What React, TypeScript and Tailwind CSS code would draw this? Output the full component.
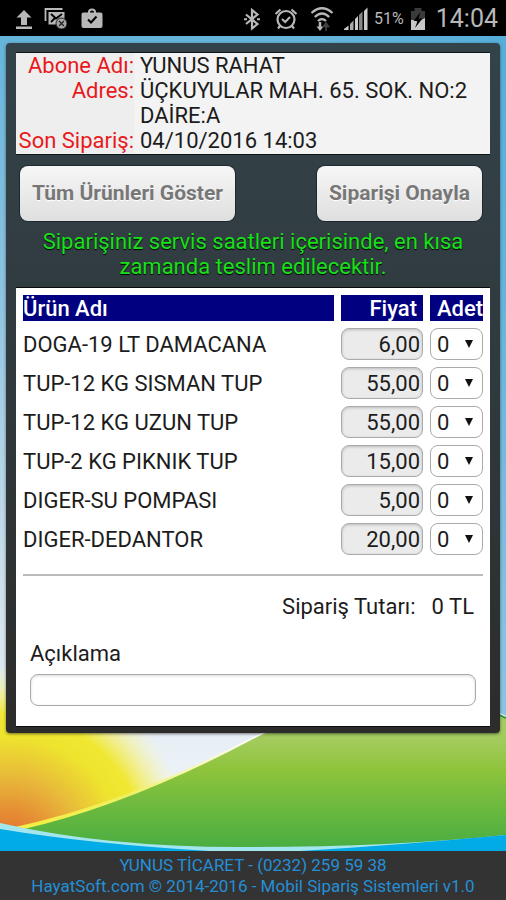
import React, { useState } from 'react';

interface Product {
  id: string;
  name: string;
  price: string;
}

const products: Product[] = [
  { id: 'doga-19', name: 'DOGA-19 LT DAMACANA', price: '6,00' },
  { id: 'tup-12-sisman', name: 'TUP-12 KG SISMAN TUP', price: '55,00' },
  { id: 'tup-12-uzun', name: 'TUP-12 KG UZUN TUP', price: '55,00' },
  { id: 'tup-2-piknik', name: 'TUP-2 KG PIKNIK TUP', price: '15,00' },
  { id: 'su-pompasi', name: 'DIGER-SU POMPASI', price: '5,00' },
  { id: 'dedantor', name: 'DIGER-DEDANTOR', price: '20,00' },
];

const customer = [
  { label: 'Abone Adı:', value: 'YUNUS RAHAT' },
  { label: 'Adres:', value: 'ÜÇKUYULAR MAH. 65. SOK. NO:2 DAİRE:A' },
  { label: 'Son Sipariş:', value: '04/10/2016 14:03' },
];

const parsePrice = (price: string) => Number(price.replace(',', '.'));

const StatusBar: React.FC = () => (
  <div className="flex h-9 items-center justify-between bg-black pl-4 pr-2 pt-0.5 text-[#b8b8b8]">
    <div className="flex items-center gap-3">
      <svg className="h-6 w-4" viewBox="0 0 16 24" fill="currentColor">
        <path d="M8 3l7.500 7.500H11V18H5v-7.500H.5z" />
        <path d="M0 19.500h16V22H0z" />
      </svg>
      <svg className="h-6 w-6" viewBox="0 0 24 24" fill="none" stroke="currentColor">
        <path d="M1.500 14V2h17" strokeWidth="1.800" />
        <path d="M4.500 5h16v7l-6 5.500h-10z" fill="currentColor" stroke="none" />
        <path d="M7 7l5 4.500L18 7M7 15l4-4" stroke="#000" strokeWidth="1.800" />
        <circle cx="17.500" cy="16.500" r="5.500" fill="#a5a5a5" stroke="#000" strokeWidth=".8" />
        <path d="M15 14l5 5M20 14l-5 5" stroke="#222" strokeWidth="1.200" />
      </svg>
      <svg className="h-6 w-6" viewBox="0 0 24 24">
        <path
          fill="currentColor"
          fillRule="evenodd"
          d="M3.500 5.500H8V5a4 3.500 0 0 1 8 0v.5h4.500a2 2 0 0 1 2 2V19a2 2 0 0 1-2 2h-17a2 2 0 0 1-2-2V7.500a2 2 0 0 1 2-2zM10 5.500h4V5a2 1.500 0 0 0-4 0z"
        />
        <path d="M8 12.500l3 3 5.500-6" fill="none" stroke="#000" strokeWidth="2" />
      </svg>
    </div>
    <div className="flex items-center gap-1.5">
      <svg className="h-6 w-5" viewBox="0 0 20 24" fill="none" stroke="currentColor" strokeWidth="2.200">
        <path d="M4 7.500l11.500 9.500L10 21.500V3l5.500 4.500L4 17" />
        <path d="M2 12.200h3M15 12.200h3" strokeWidth="2" />
      </svg>
      <svg className="ml-1.5 h-6 w-6" viewBox="0 0 24 24" fill="none" stroke="currentColor">
        <circle cx="12" cy="12.500" r="8.500" strokeWidth="2.200" />
        <path d="M8 12l3.200 3L16 10" strokeWidth="2" />
        <path d="M1.500 7L6.500 2.500M22.500 7l-5-4.500M6 19l-2 2.500M18 19l2 2.500" strokeWidth="2.200" />
      </svg>
      <svg className="ml-1.5 h-7 w-6" viewBox="0 0 24 28" fill="none" stroke="currentColor" strokeWidth="2.200">
        <path d="M1.500 8Q12-1.500 22.500 8M4.800 12Q12 5 19.200 12M8 16Q12 12 16 16" />
        <path d="M10 17v6" strokeWidth="2.500" />
        <path d="M6.500 21.500h7L10 26z" fill="currentColor" stroke="none" />
        <path d="M16 26v-6M13.500 21.500L16 18l2.500 3.500z" stroke="#444" strokeWidth="1.500" />
      </svg>
      <svg className="ml-1 h-6 w-6" viewBox="0 0 24 24">
        <path d="M0 23v-1l4.500-3.500V23z" fill="#ccc" />
        <path d="M6 23v-6l3.500-3.500V23z" fill="#aaa" />
        <path d="M11 23V12l3-3v14z" fill="#ccc" />
        <path d="M15 23V8l3.500-3.500V23z" fill="#888" />
        <path d="M20 23V4l3.500-3.500V23z" fill="#ccc" />
      </svg>
      <span className="text-base">51%</span>
      <svg className="h-6 w-4" viewBox="0 0 16 24">
        <path d="M4.500 1h7v3H15v19H1V4h3.500z" fill="#3a3a3a" />
        <path d="M1 13h5l1 2 8-4v12H1z" fill="#c8c8c8" />
        <path d="M10.500 5L3.500 14h4L5 21l7.500-9.500h-4z" fill="#000" />
      </svg>
      <span className="pl-1 text-[25px] leading-8">14:04</span>
    </div>
  </div>
);

// Sunrise and hill behind the order card
const Landscape: React.FC = () => (
  <svg
    className="absolute inset-0 -z-10 h-full w-full"
    viewBox="0 0 506 815"
    preserveAspectRatio="none"
    aria-hidden="true"
  >
    <defs>
      <linearGradient id="sky" x1="0" y1="0" x2="0" y2="1">
        <stop offset="0" stopColor="#66b4da" />
        <stop offset=".3" stopColor="#8cc2e0" />
        <stop offset=".7" stopColor="#d2e2ec" />
        <stop offset=".87" stopColor="#e8f0f6" />
        <stop offset="1" stopColor="#f3f6fa" />
      </linearGradient>
      <linearGradient id="skyRight" x1="0" y1="0" x2="1" y2="0">
        <stop offset=".6" stopColor="#4aaad8" stopOpacity="0" />
        <stop offset="1" stopColor="#4aaad8" stopOpacity=".6" />
      </linearGradient>
      <radialGradient id="sun" gradientUnits="userSpaceOnUse" cx="8" cy="815" r="185">
        <stop offset="0" stopColor="#e4632a" />
        <stop offset=".2" stopColor="#e58a34" />
        <stop offset=".4" stopColor="#e8b93a" />
        <stop offset=".62" stopColor="#eee42e" />
        <stop offset=".74" stopColor="#f0e834" />
        <stop offset=".84" stopColor="#f4ee78" stopOpacity=".75" />
        <stop offset="1" stopColor="#fbf8c0" stopOpacity="0" />
      </radialGradient>
      <linearGradient id="hill" gradientUnits="userSpaceOnUse" x1="0" y1="670" x2="0" y2="810">
        <stop offset="0" stopColor="#a6cc66" />
        <stop offset=".25" stopColor="#a2cb5c" />
        <stop offset=".45" stopColor="#8fc43c" />
        <stop offset=".8" stopColor="#62b63f" />
        <stop offset="1" stopColor="#4bae42" />
      </linearGradient>
      <linearGradient id="rim" x1="0" y1="0" x2="1" y2="0">
        <stop offset="0" stopColor="#f6ee3a" />
        <stop offset=".25" stopColor="#eef060" />
        <stop offset=".5" stopColor="#ffffff" />
      </linearGradient>
    </defs>
    <rect width="506" height="815" fill="url(#sky)" />
    <rect width="506" height="815" fill="url(#skyRight)" />
    <rect width="506" height="815" fill="url(#sun)" />
    <path d="M15 791Q130 766 253 701Q400 625 506 680V815H0z" fill="url(#rim)" />
    <path d="M20 794Q130 769 253 703Q400 628 506 682V815H0z" fill="url(#hill)" />
    <path d="M470 665L506 682" stroke="#2f9a45" strokeWidth="2" />
    <path d="M0 787Q110 812 250 811Q390 811 506 799V815H0z" fill="#a4e6ee" />
    <path d="M0 793Q90 808 210 815H0z" fill="#00abe6" />
    <path d="M300 815Q400 809 506 799V815z" fill="#00abe6" />
  </svg>
);

const App: React.FC = () => {
  const [quantities, setQuantities] = useState<Record<string, number>>({});
  const [note, setNote] = useState('');

  const total = products.reduce((sum, p) => sum + parsePrice(p.price) * (quantities[p.id] ?? 0), 0);

  return (
    <div className="flex min-h-screen flex-col font-['Roboto',sans-serif] text-[22px] leading-[25px] text-[#1c1c1c]">
      <StatusBar />

      <main className="relative isolate flex-1 px-1.5 pt-[7px]">
        <Landscape />
        <div className="rounded bg-gradient-to-b from-[#33434a] via-[#30393d] to-[#2c2c2a] px-2.5 pb-1.5 pt-[9px] shadow-[0_1px_3px_rgba(0,0,0,0.5)]">
          <div className="border-y border-[#0c1418] bg-[#f3f3f3] pb-px">
            <table className="w-full">
              <tbody>
                {customer.map((row) => (
                  <tr key={row.label} className="align-top">
                    <th scope="row" className="w-[118px] whitespace-nowrap bg-[#eeeeee] text-right font-normal text-[#e8191c]">
                      {row.label}
                    </th>
                    <td className="pl-1.5">{row.value}</td>
                  </tr>
                ))}
              </tbody>
            </table>
          </div>

          <div className="flex justify-between pb-2 pl-1 pr-2 pt-[11px] text-[21px] font-bold text-[#777]">
            <button
              type="button"
              className="h-[55px] rounded-lg bg-gradient-to-b from-[#f6f6f6] to-[#dfdfdf] px-3 shadow-[0_0_0_1px_#1b2a30] [text-shadow:0_1px_0_#fff]"
            >
              Tüm Ürünleri Göster
            </button>
            <button
              type="button"
              className="h-[55px] rounded-lg bg-gradient-to-b from-[#f6f6f6] to-[#dfdfdf] px-3 shadow-[0_0_0_1px_#1b2a30] [text-shadow:0_1px_0_#fff]"
            >
              Siparişi Onayla
            </button>
          </div>

          <p className="px-4 pb-2 text-center text-[#19e019] [text-shadow:0_1px_1px_#000]">
            Siparişiniz servis saatleri içerisinde, en kısa zamanda teslim edilecektir.
          </p>

          <form className="border-y border-[#0c0c0c] bg-white pb-5">
            <table className="w-full table-fixed border-separate border-spacing-[7px]">
              <thead>
                <tr className="h-[26px] text-white">
                  <th scope="col" className="bg-[#000080] text-left font-medium">Ürün Adı</th>
                  <th scope="col" className="w-[82px] bg-[#000080] pr-1.5 text-right font-medium">Fiyat</th>
                  <th scope="col" className="w-[53px] bg-[#000080] text-right font-medium">Adet</th>
                </tr>
              </thead>
              <tbody>
                {products.map((p) => (
                  <tr key={p.id} className="h-8">
                    <td className="whitespace-nowrap">{p.name}</td>
                    <td>
                      <input
                        type="text"
                        readOnly
                        value={p.price}
                        aria-label={`${p.name} fiyat`}
                        className="block h-8 w-full rounded-lg border border-[#aaa] bg-[#ebebeb] pr-0.5 text-right shadow-[inset_0_1px_3px_rgba(0,0,0,0.2)]"
                      />
                    </td>
                    <td>
                      <div className="relative">
                        <select
                          aria-label={`${p.name} adet`}
                          value={quantities[p.id] ?? 0}
                          onChange={(e) => setQuantities({ ...quantities, [p.id]: Number(e.target.value) })}
                          className="block h-8 w-full appearance-none rounded-lg border border-[#aaa] bg-white pl-1.5"
                        >
                          {[0, 1, 2, 3, 4, 5].map((n) => (
                            <option key={n} value={n}>{n}</option>
                          ))}
                        </select>
                        <svg
                          className="pointer-events-none absolute right-2.5 top-3 h-2 w-2"
                          viewBox="0 0 8 8"
                          aria-hidden="true"
                        >
                          <path d="M0 0h8L4 8z" fill="#111" />
                        </svg>
                      </div>
                    </td>
                  </tr>
                ))}
              </tbody>
            </table>

            <hr className="mx-[7px] mt-3 border-t-2 border-[#bbb]" />

            <div className="flex justify-end gap-4 pr-4 pt-[18px]">
              <span>Sipariş Tutarı:</span>
              <span>{total.toLocaleString('tr-TR')} TL</span>
            </div>

            <div className="px-3.5 pt-[22px]">
              <label htmlFor="note" className="block">Açıklama</label>
              <input
                id="note"
                type="text"
                value={note}
                onChange={(e) => setNote(e.target.value)}
                className="mt-2 block h-8 w-full rounded-lg border border-[#aaa] bg-white px-2 shadow-[inset_0_1px_3px_rgba(0,0,0,0.15)]"
              />
            </div>
          </form>
        </div>
      </main>

      <footer className="bg-[#333] pb-[3px] pt-1 text-center text-[17px] leading-[21px] text-[#258fd6]">
        <p>YUNUS TİCARET - (0232) 259 59 38</p>
        <p>HayatSoft.com © 2014-2016 - Mobil Sipariş Sistemleri v1.0</p>
      </footer>
    </div>
  );
};

export default App;
